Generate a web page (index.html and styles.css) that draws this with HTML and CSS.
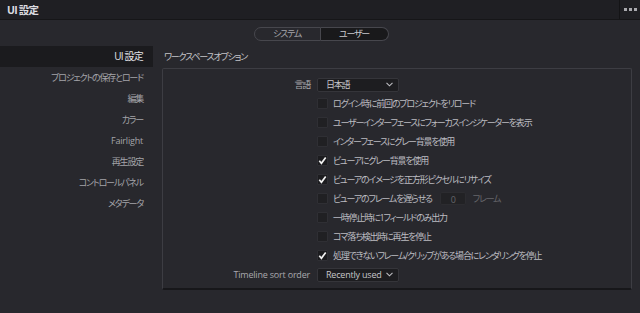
FILE: index.html
```
<html lang="ja">
<head>
    <meta charset="UTF-8">
    <title>UI 設定</title>
    <link rel="stylesheet" href="styles.css">
</head>
<body>
    <div class="titlebar">
        <span class="title">UI 設定</span>
        <span class="more"><i></i><i></i><i></i></span>
    </div>
    <div class="tabs">
        <span class="tab">システム</span>
        <span class="tab active">ユーザー</span>
    </div>
    <div class="layout">
        <nav class="sidebar">
            <div class="item selected">UI 設定</div>
            <div class="item">プロジェクトの保存とロード</div>
            <div class="item">編集</div>
            <div class="item">カラー</div>
            <div class="item latin">Fairlight</div>
            <div class="item">再生設定</div>
            <div class="item">コントロールパネル</div>
            <div class="item">メタデータ</div>
        </nav>
        <section class="content">
            <div class="section-title">ワークスペースオプション</div>
            <div class="panel">
                <div class="row">
                    <span class="label">言語</span>
                    <span class="select"><span>日本語</span><svg width="7" height="5" viewBox="0 0 7 5"><path d="M0.5 0.8 L3.5 3.8 L6.5 0.8" fill="none" stroke="#bdbdc2" stroke-width="1.1"/></svg></span>
                </div>
                <div class="row">
                    <span class="label"></span>
                    <label class="check"><span class="box"></span>ログイン時に前回のプロジェクトをリロード</label>
                </div>
                <div class="row">
                    <span class="label"></span>
                    <label class="check"><span class="box"></span>ユーザーインターフェースにフォーカスインジケーターを表示</label>
                </div>
                <div class="row">
                    <span class="label"></span>
                    <label class="check"><span class="box"></span>インターフェースにグレー背景を使用</label>
                </div>
                <div class="row">
                    <span class="label"></span>
                    <label class="check"><span class="box on"><svg width="11" height="11" viewBox="0 0 11 11"><path d="M2.3 5.8 L4.4 8.3 L8.7 2.4" fill="none" stroke="#f2f2f2" stroke-width="1.7"/></svg></span>ビューアにグレー背景を使用</label>
                </div>
                <div class="row">
                    <span class="label"></span>
                    <label class="check"><span class="box on"><svg width="11" height="11" viewBox="0 0 11 11"><path d="M2.3 5.8 L4.4 8.3 L8.7 2.4" fill="none" stroke="#f2f2f2" stroke-width="1.7"/></svg></span>ビューアのイメージを正方形ピクセルにリサイズ</label>
                </div>
                <div class="row">
                    <span class="label"></span>
                    <label class="check"><span class="box"></span>ビューアのフレームを遅らせる<span class="number">0</span><span class="unit">フレーム</span></label>
                </div>
                <div class="row">
                    <span class="label"></span>
                    <label class="check"><span class="box"></span>一時停止時に1フィールドのみ出力</label>
                </div>
                <div class="row">
                    <span class="label"></span>
                    <label class="check"><span class="box"></span>コマ落ち検出時に再生を停止</label>
                </div>
                <div class="row">
                    <span class="label"></span>
                    <label class="check"><span class="box on"><svg width="11" height="11" viewBox="0 0 11 11"><path d="M2.3 5.8 L4.4 8.3 L8.7 2.4" fill="none" stroke="#f2f2f2" stroke-width="1.7"/></svg></span>処理できないフレーム/クリップがある場合にレンダリングを停止</label>
                </div>
                <div class="row">
                    <span class="label latin">Timeline sort order</span>
                    <span class="select latin"><span>Recently used</span><svg width="7" height="5" viewBox="0 0 7 5"><path d="M0.5 0.8 L3.5 3.8 L6.5 0.8" fill="none" stroke="#bdbdc2" stroke-width="1.1"/></svg></span>
                </div>
            </div>
        </section>
    </div>
</body>
</html>
```

FILE: styles.css
```
*{
    box-sizing: border-box;
    /*resolve-ish greys*/
    --color-bg:#28282d;
    --color-bar:#1f1f23;
    --color-deep:#1b1b1e;
    --color-line:#3d3d43;
    --color-text:#b3b3b8;
    --color-dim:#66666b;
}
body{
    margin: 0;
    width: 640px;
    height: 313px;
    overflow: hidden;
    background-color: var(--color-bg);
    color: var(--color-text);
    font-family: "Open Sans", "Noto Sans CJK JP", sans-serif;
    font-size: 9px;
    font-feature-settings: "palt";
    letter-spacing: -1.2px;
}
.latin{
    font-size: 9px;
    letter-spacing: -0.2px;
}
.titlebar{
    height: 20px;
    display: flex;
    align-items: center;
    background-color: var(--color-bar);
    border-bottom: 1px solid #161618;
    & .title{
        flex: 1;
        padding-left: 7px;
        font-size: 10.5px;
        font-weight: 700;
        letter-spacing: -0.8px;
        color: #dcdce0;
    }
    & .more{
        width: 21px;
        height: 100%;
        border-left: 1px solid #141416;
        display: flex;
        align-items: center;
        justify-content: center;
        gap: 2px;
        & i{
            width: 3px;
            height: 3px;
            background-color: #a9a9ae;
        }
    }
}
.tabs{
    display: flex;
    justify-content: center;
    margin-top: 7px;
    margin-left: 2px;
    & .tab{
        width: 67px;
        height: 14px;
        line-height: 12px;
        text-align: center;
        border: 1px solid #47474d;
        color: #a6a6ab;
        &:first-child{
            border-radius: 7px 0 0 7px;
        }
        &:last-child{
            width: 68px;
            border-left: none;
            border-radius: 0 7px 7px 0;
        }
    }
    & .active{
        background-color: #19191b;
        color: #c8c8cc;
    }
}
.layout{
    display: flex;
    margin-top: 5px;
}
.sidebar{
    width: 153px;
    & .item{
        height: 21px;
        line-height: 21px;
        padding-right: 10px;
        text-align: right;
        color: #a4a4a9;
    }
    & .selected{
        background-color: var(--color-deep);
        color: #e4e4e8;
        font-size: 10px;
        letter-spacing: -0.8px;
    }
}
.content{
    flex: 1;
    padding: 0 8px 0 9px;
}
.section-title{
    height: 22px;
    line-height: 22px;
    padding-left: 2px;
    color: #c4c4c8;
}
.panel{
    height: 222px;
    border: 1px solid var(--color-line);
    border-bottom: 2px solid #17171a;
    border-radius: 2px;
    padding: 6px 0 0;
}
.row{
    display: grid;
    grid-template-columns: 147px auto;
    column-gap: 7px;
    height: 19px;
    align-items: center;
    & .label{
        text-align: right;
        color: #a8a8ad;
    }
}
.select{
    width: 82px;
    height: 14px;
    display: flex;
    align-items: center;
    justify-content: space-between;
    padding: 0 5px 0 8px;
    background-color: #1d1d20;
    border: 1px solid #35353a;
    border-radius: 2px;
    color: #c6c6ca;
}
.check{
    display: flex;
    align-items: center;
    color: #bcbcc1;
    & .box{
        width: 11px;
        height: 11px;
        margin-right: 5px;
        background-color: #202023;
        border: 1px solid #2f2f34;
        border-radius: 1px;
        & svg{
            display: block;
            margin: -1px;
        }
    }
    & .on{
        background-color: #1c1c1f;
    }
}
.number{
    width: 26px;
    height: 13px;
    line-height: 13px;
    margin-left: 8px;
    text-align: center;
    background-color: #222225;
    border: 1px solid #2c2c30;
    border-radius: 2px;
    color: var(--color-dim);
}
.unit{
    margin-left: 7px;
    color: var(--color-dim);
}
```
